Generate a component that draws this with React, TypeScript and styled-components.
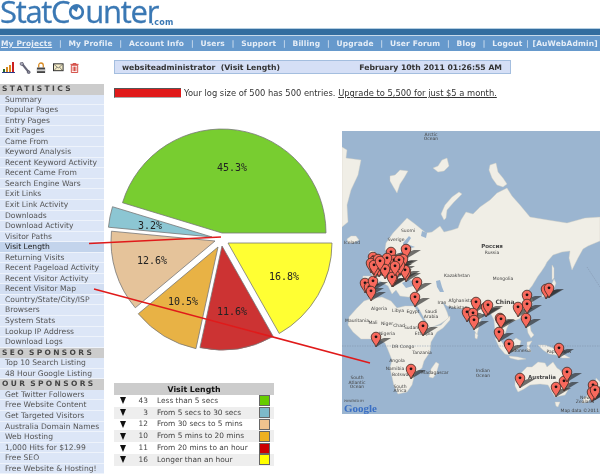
import React from 'react';
import styled, { createGlobalStyle } from 'styled-components';

const GlobalStyle = createGlobalStyle`
  html, body {
    margin: 0;
    padding: 0;
    width: 600px;
    height: 475px;
    overflow: hidden;
    background: #fff;
  }
`;

const Page = styled.div`
  position: relative;
  width: 600px;
  height: 475px;
  overflow: hidden;
  background: #fff;
  font-family: 'DejaVu Sans', Verdana, sans-serif;
  color: #333;
  filter: blur(0.35px);
`;

const LogoBar = styled.div`
  height: 28px;
  display: flex;
  align-items: flex-start;
`;

const LogoText = styled.span`
  font-family: 'Open Sans', sans-serif;
  font-size: 31px;
  line-height: 23px;
  letter-spacing: -1.3px;
  -webkit-text-stroke: 0.3px #3a78b4;
  color: #3a78b4;
  display: flex;
  align-items: flex-start;
`;

const LogoPie = styled.svg`
  flex: none;
  margin: 3px 0 0 -1px;
`;

const LogoDomain = styled.span`
  font-size: 8px;
  font-weight: bold;
  letter-spacing: 0.2px;
  color: #3a78b4;
  margin: 18px 0 0 -7px;
`;

const TopStripe = styled.div`
  height: 6px;
  background: #336d9f;
  border-top: 1px solid #b5cfe2;
  border-bottom: 1px solid #c8daea;
`;

const NavBar = styled.nav`
  height: 15px;
  background: #6699cc;
  display: flex;
  align-items: center;
  padding-left: 1px;
  font-size: 7.5px;
  font-weight: bold;
  letter-spacing: 0.15px;
  color: #e6eef7;
  white-space: nowrap;
`;

const NavLink = styled.span<{ $current?: boolean }>`
  flex: none;
  text-decoration: ${(p) => (p.$current ? 'underline' : 'none')};
`;

const NavDivider = styled.span<{ $narrow?: boolean }>`
  flex: none;
  width: ${(p) => (p.$narrow ? 10 : 16.3)}px;
  text-align: center;
  font-weight: normal;
`;

const Body = styled.div`
  display: flex;
  align-items: flex-start;
`;

const Sidebar = styled.aside`
  width: 104px;
  flex: none;
`;

const Toolbar = styled.div`
  height: 33px;
  display: flex;
  align-items: center;
  gap: 5px;
  padding-left: 2px;
`;

const ToolIcon = styled.svg<{ $inset?: number }>`
  flex: none;
  margin-left: ${(p) => p.$inset ?? 0}px;
`;

const SideHeading = styled.div`
  height: 10.55px;
  line-height: 10.5px;
  background: #cccccc;
  padding-left: 2px;
  font-size: 7.5px;
  font-weight: bold;
  letter-spacing: 2.35px;
  word-spacing: -2px;
  color: #444;
  white-space: nowrap;
`;

const SideRow = styled.div<{ $tone?: 'active' | 'hover' }>`
  box-sizing: border-box;
  height: 10.55px;
  line-height: 10px;
  padding-left: 5px;
  font-size: 7.6px;
  color: ${(p) => (p.$tone === 'active' ? '#222' : '#555')};
  white-space: nowrap;
  background: ${(p) =>
    p.$tone === 'active' ? '#c3d4ec' : p.$tone === 'hover' ? '#d2def2' : '#dce6f7'};
  border-bottom: 1px solid #eef3fb;
`;

const Main = styled.main`
  flex: 1;
  min-width: 0;
`;

const TitleBox = styled.div`
  box-sizing: border-box;
  width: 397px;
  height: 14px;
  margin: 9px 0 0 10px;
  padding: 0 8px 0 7px;
  display: flex;
  justify-content: space-between;
  align-items: center;
  background: #d5dff6;
  border: 1px solid #a4bedf;
  font-size: 7.7px;
  font-weight: bold;
  color: #333;
`;

const LogRow = styled.div`
  height: 16px;
  margin: 11px 0 0 10px;
  display: flex;
  align-items: center;
  gap: 3px;
  font-size: 8.35px;
  color: #333;
  white-space: nowrap;
`;

const LogBar = styled.div`
  box-sizing: border-box;
  width: 67px;
  height: 10px;
  background: #e01919;
  border-top: 1px solid #555;
  border-left: 1px solid #555;
  border-bottom: 1px solid #aaa;
`;

const LogLink = styled.span`
  text-decoration: underline;
`;

const Charts = styled.div`
  display: flex;
  align-items: flex-start;
  margin-top: 24px;
`;

const ChartColumn = styled.div`
  width: 238px;
  flex: none;
`;

const PieGraphic = styled.svg`
  display: block;
  width: 238px;
  height: 230px;
`;

const PieLabel = styled.text`
  font-family: 'DejaVu Sans Mono', monospace;
  font-size: 10px;
  fill: #222;
  text-anchor: middle;
`;

const Legend = styled.table`
  width: 160px;
  margin: 28px 0 0 10px;
  border-collapse: collapse;
  font-size: 7.4px;
  color: #444;
  table-layout: fixed;
`;

const LegendHead = styled.th`
  height: 12px;
  padding: 0;
  background: #cccccc;
  font-size: 7.8px;
  font-weight: bold;
  color: #111;
  text-align: center;
`;

const LegendRow = styled.tr`
  height: 11.8px;
  &:nth-child(even) {
    background: #eeeeee;
  }
`;

const LegendCell = styled.td<{ $align?: string }>`
  padding: 0;
  line-height: 10px;
  white-space: nowrap;
  text-align: ${(p) => p.$align ?? 'left'};
`;

const Arrow = styled.span`
  display: inline-block;
  border-left: 3.5px solid transparent;
  border-right: 3.5px solid transparent;
  border-top: 7px solid #111;
  vertical-align: middle;
`;

const Swatch = styled.span<{ $color: string }>`
  display: block;
  box-sizing: border-box;
  width: 11px;
  height: 11px;
  background: ${(p) => p.$color};
  border: 1px solid #666;
`;

const MapFrame = styled.svg`
  display: block;
  width: 258px;
  height: 283px;
  margin-top: 6px;
  flex: none;
`;

const MapLabel = styled.text<{ $size?: number; $bold?: boolean; $anchor?: string }>`
  font-family: 'DejaVu Sans', sans-serif;
  font-size: ${(p) => p.$size ?? 4.5}px;
  font-weight: ${(p) => (p.$bold ? 'bold' : 'normal')};
  fill: #444;
  text-anchor: ${(p) => p.$anchor ?? 'middle'};
`;

const GoogleMark = styled.text`
  font-family: 'Liberation Serif', serif;
  font-size: 11px;
  font-weight: bold;
  fill: #3a6fc4;
`;

const Overlay = styled.svg`
  position: absolute;
  left: 0;
  top: 0;
  width: 600px;
  height: 475px;
  pointer-events: none;
`;

const navItems = ['My Projects', 'My Profile', 'Account Info', 'Users', 'Support', 'Billing', 'Upgrade', 'User Forum', 'Blog', 'Logout'];

const statistics = [
  'Summary', 'Popular Pages', 'Entry Pages', 'Exit Pages', 'Came From', 'Keyword Analysis',
  'Recent Keyword Activity', 'Recent Came From', 'Search Engine Wars', 'Exit Links',
  'Exit Link Activity', 'Downloads', 'Download Activity', 'Visitor Paths', 'Visit Length',
  'Returning Visits', 'Recent Pageload Activity', 'Recent Visitor Activity', 'Recent Visitor Map',
  'Country/State/City/ISP', 'Browsers', 'System Stats', 'Lookup IP Address', 'Download Logs',
];
const seoSponsors = ['Top 10 Search Listing', '48 Hour Google Listing'];
const ourSponsors = [
  'Get Twitter Followers', 'Free Website Content', 'Get Targeted Visitors', 'Australia Domain Names',
  'Web Hosting', '1,000 Hits for $12.99', 'Free SEO', 'Free Website & Hosting!',
];

const slices = [
  { pct: 45.3, fill: '#78cd30', cx: 222, cy: 233, lx: 232, ly: 171 },
  { pct: 3.2, fill: '#8cc6d3', cx: 212, cy: 237, lx: 150, ly: 229 },
  { pct: 12.6, fill: '#e5c39a', cx: 215, cy: 241, lx: 152, ly: 264 },
  { pct: 10.5, fill: '#e8b245', cx: 218, cy: 247, lx: 183, ly: 305 },
  { pct: 11.6, fill: '#cc3333', cx: 222, cy: 246, lx: 232, ly: 315 },
  { pct: 16.8, fill: '#ffff33', cx: 228, cy: 243, lx: 284, ly: 280 },
];

const legend = [
  { count: 43, label: 'Less than 5 secs', color: '#66cc00' },
  { count: 3, label: 'From 5 secs to 30 secs', color: '#7db9c9' },
  { count: 12, label: 'From 30 secs to 5 mins', color: '#f0c48e' },
  { count: 10, label: 'From 5 mins to 20 mins', color: '#eeb020' },
  { count: 11, label: 'From 20 mins to an hour', color: '#cc0000' },
  { count: 16, label: 'Longer than an hour', color: '#ffff00' },
];

function slicePath(cx: number, cy: number, from: number, to: number) {
  const r = 104;
  const rad = Math.PI / 180;
  const x0 = cx + r * Math.cos(from * rad);
  const y0 = cy - r * Math.sin(from * rad);
  const x1 = cx + r * Math.cos(to * rad);
  const y1 = cy - r * Math.sin(to * rad);
  const large = to - from > 180 ? 1 : 0;
  return `M${cx} ${cy}L${x0} ${y0}A${r} ${r} 0 ${large} 0 ${x1} ${y1}Z`;
}

function PieChart() {
  let angle = 0;
  const total = slices.reduce((sum, s) => sum + s.pct, 0);
  return (
    <PieGraphic viewBox="104 125 238 230">
      {slices.map((s) => {
        const from = angle;
        angle += (s.pct / total) * 360;
        return <path key={s.pct} d={slicePath(s.cx, s.cy, from, angle)} fill={s.fill} stroke="#777" strokeWidth="0.8" />;
      })}
      {slices.map((s) => (
        <PieLabel key={s.pct} x={s.lx} y={s.ly}>{s.pct}%</PieLabel>
      ))}
    </PieGraphic>
  );
}

const land = [
  // eurasia
  '407,218 415,224 426,233 432,232 440,226 444,232 452,230 458,228 461,220 466,212 473,214 480,207 490,200 497,193 507,188 512,196 520,205 530,217 548,220 567,223 585,218 600,217 600,241 588,246 583,249 578,258 572,270 569,258 570,251 562,252 553,255 547,262 545,266 541,272 538,276 532,286 527,292 533,300 531,307 527,314 519,319 510,322 507,328 505,334 499,330 498,340 495,331 494,320 491,314 484,312 480,322 477,335 473,328 468,318 463,309 455,308 447,306 442,301 447,312 449,318 440,324 430,328 424,318 419,309 415,303 417,298 408,297 400,296 396,290 392,294 388,286 380,281 376,284 372,292 364,292 362,285 363,276 372,276 371,268 376,262 381,258 388,255 392,254 385,250 386,243 393,233',
  // africa
  '357,308 364,301 373,298 382,297 391,301 397,308 405,306 414,306 419,314 424,322 430,328 441,325 450,316 450,320 443,328 437,332 431,342 430,352 424,361 422,368 415,373 412,385 407,392 398,394 394,386 392,377 390,368 392,360 388,350 385,343 378,339 370,339 361,339 353,332 348,325 349,317',
  // greenland
  '342,147 347,150 346,158 361,160 358,175 351,190 347,205 348,222 342,227',
  // iceland
  '347,239 351,236 356,236 359,240 353,243 348,243',
  // svalbard
  '390,176 395,175 400,170 408,171 404,178 400,184 397,193 394,188 390,181',
  // novaya zemlya
  '459,192 462,194 454,202 447,210 446,218 444,220 441,214 445,205 452,197',
  // severnaya
  '490,165 496,163 498,172 503,178 507,184 503,187 497,185 492,178 489,170',
  // franz josef
  '433,168 438,166 442,160 447,158 449,166 444,171 438,172',
  // uk
  '370,251 374,251 375,258 378,262 371,264 368,259',
  // madagascar
  '436,362 439,364 436,374 433,378 429,377 431,369',
  // australia
  '515,377 521,373 527,367 532,367 538,362 545,363 547,367 553,362 557,368 560,370 565,376 570,382 568,390 565,395 555,397 552,392 548,385 540,384 530,385 524,389 518,392 515,386',
  // tasmania
  '555,402 560,402 558,407 556,406',
  // new guinea
  '538,345 545,345 553,348 558,351 563,354 570,358 562,358 556,355 549,354 543,350',
  // sumatra
  '495,338 501,341 507,349 509,355 505,354 499,347',
  // java
  '509,356 518,357 526,359 518,360 510,358',
  // borneo
  '510,343 516,338 521,341 519,348 513,352 510,349',
  // sulawesi
  '527,342 532,341 529,346 531,352 527,350',
  // philippines
  '527,327 530,325 531,331 534,335 531,338 528,333',
  // sri lanka
  '475,333 478,335 477,339 475,338',
  // japan
  '554,279 556,283 553,291 548,295 542,297 543,293 549,290',
  // sakhalin
  '552,265 554,268 554,278 552,280 552,272',
  // new zealand
  '596,378 600,382 600,390 596,393 595,386',
  '584,398 592,392 594,394 588,402 582,403',
];

const water = [
  // black sea
  '402,283 408,280 415,281 420,284 413,286 406,288',
  // caspian
  '436,281 440,280 442,287 444,292 440,292 437,287',
  // baltic
  '399,254 404,248 403,243 409,236 411,238 407,244 415,247 407,249 408,255',
  // white sea
  '422,231 427,233 426,238 421,236',
];

const pins = [
  [376, 337], [411, 369], [423, 326], [415, 297], [417, 282], [393, 277], [406, 272],
  [365, 283], [369, 287], [373, 281], [371, 291], [476, 302], [467, 312], [473, 313], [474, 320],
  [486, 307], [488, 305], [500, 318], [501, 319], [499, 332], [509, 344], [518, 307], [527, 295],
  [527, 304], [526, 318], [546, 289], [549, 288], [559, 348], [520, 378], [556, 387], [564, 381],
  [567, 372], [593, 385], [592, 392], [595, 390], [373, 257], [391, 252], [406, 249], [374, 261],
  [371, 263], [377, 265], [379, 267], [384, 261], [390, 262], [391, 267], [397, 263], [397, 268],
  [403, 259], [405, 270], [392, 277], [375, 268], [383, 266], [400, 265], [378, 259], [381, 263],
  [387, 265], [394, 260], [399, 260], [387, 258], [374, 265], [395, 266], [385, 269], [380, 261],
];

function Pin({ x, y }: { x: number; y: number }) {
  return (
    <g transform={`translate(${x} ${y})`}>
      <path d="M0 10C-1 6.5 -4.8 3.8 -4.8 0A4.8 4.8 0 1 1 4.8 0C4.8 3.8 1 6.5 0 10Z" fill="#f8695c" stroke="#3a2a22" strokeWidth="0.8" />
      <circle cx="0" cy="-0.2" r="1.4" fill="#1a1010" />
    </g>
  );
}

function WorldMap() {
  return (
    <MapFrame viewBox="342 131 258 283">
      <rect x="342" y="131" width="258" height="283" fill="#9bb5d0" />
      {land.map((points) => (
        <polygon key={points} points={points} fill="#f0eee6" stroke="#cfcdbf" strokeWidth="0.4" />
      ))}
      {water.map((points) => (
        <polygon key={points} points={points} fill="#9bb5d0" />
      ))}
      <path d="M342 346H600" stroke="#7f8ea6" strokeWidth="0.5" strokeDasharray="1.5 1" fill="none" />
      <path d="M587 267L600 287" stroke="#7f8ea6" strokeWidth="0.5" strokeDasharray="1.5 1" fill="none" />
      <MapLabel x="431" y="136">Arctic</MapLabel>
      <MapLabel x="431" y="140">Ocean</MapLabel>
      <MapLabel x="408" y="232">Suomi</MapLabel>
      <MapLabel x="396" y="241">Sverige</MapLabel>
      <MapLabel x="352" y="244">Iceland</MapLabel>
      <MapLabel x="492" y="248" $size={5.5} $bold>Россия</MapLabel>
      <MapLabel x="492" y="254">Russia</MapLabel>
      <MapLabel x="457" y="277">Kazakhstan</MapLabel>
      <MapLabel x="503" y="280">Mongolia</MapLabel>
      <MapLabel x="505" y="304" $size={6} $bold>China</MapLabel>
      <MapLabel x="442" y="304">Iran</MapLabel>
      <MapLabel x="462" y="302">Afghanistan</MapLabel>
      <MapLabel x="458" y="309">Pakistan</MapLabel>
      <MapLabel x="431" y="313">Saudi</MapLabel>
      <MapLabel x="431" y="318">Arabia</MapLabel>
      <MapLabel x="413" y="313">Egypt</MapLabel>
      <MapLabel x="379" y="310">Algeria</MapLabel>
      <MapLabel x="398" y="312">Libya</MapLabel>
      <MapLabel x="357" y="322">Mauritania</MapLabel>
      <MapLabel x="373" y="324">Mali</MapLabel>
      <MapLabel x="387" y="325">Niger</MapLabel>
      <MapLabel x="399" y="327">Chad</MapLabel>
      <MapLabel x="411" y="329">Sudan</MapLabel>
      <MapLabel x="424" y="335">Ethiopia</MapLabel>
      <MapLabel x="387" y="335">Nigeria</MapLabel>
      <MapLabel x="403" y="348">DR Congo</MapLabel>
      <MapLabel x="422" y="354">Tanzania</MapLabel>
      <MapLabel x="397" y="362">Angola</MapLabel>
      <MapLabel x="395" y="370">Namibia</MapLabel>
      <MapLabel x="403" y="376">Botswana</MapLabel>
      <MapLabel x="400" y="388">South</MapLabel>
      <MapLabel x="400" y="392">Africa</MapLabel>
      <MapLabel x="435" y="374">Madagascar</MapLabel>
      <MapLabel x="357" y="379">South</MapLabel>
      <MapLabel x="357" y="384">Atlantic</MapLabel>
      <MapLabel x="357" y="388">Ocean</MapLabel>
      <MapLabel x="483" y="372">Indian</MapLabel>
      <MapLabel x="483" y="377">Ocean</MapLabel>
      <MapLabel x="520" y="352">Indonesia</MapLabel>
      <MapLabel x="559" y="353">Papua New</MapLabel>
      <MapLabel x="542" y="379" $size={5.5} $bold>Australia</MapLabel>
      <MapLabel x="585" y="399">New</MapLabel>
      <MapLabel x="585" y="403">Zealand</MapLabel>
      <MapLabel x="344" y="402" $size={3} $anchor="start">POWERED BY</MapLabel>
      <GoogleMark x="344" y="412">Google</GoogleMark>
      <MapLabel x="599" y="412" $anchor="end">Map data ©2011</MapLabel>
      {pins.map(([x, y]) => (
        <polygon key={`s${x}-${y}`} points={`${x},${y + 10} ${x + 15},${y + 1} ${x + 8},${y + 1} ${x + 2},${y + 3}`} fill="#2a2a2a" opacity="0.65" />
      ))}
      {pins.map(([x, y]) => (
        <Pin key={`${x}-${y}`} x={x} y={y} />
      ))}
    </MapFrame>
  );
}

function ToolIcons() {
  return (
    <Toolbar>
      <ToolIcon width="13" height="11" viewBox="0 0 13 11">
        <path d="M0 10.5H13" stroke="#2a3a88" strokeWidth="1" />
        <rect x="1" y="7" width="2" height="3" fill="#2a6a2a" />
        <rect x="4" y="5" width="2" height="5" fill="#d88a20" />
        <rect x="7" y="3" width="2" height="7" fill="#d88a20" />
        <rect x="10" y="0" width="2" height="10" fill="#cc2020" />
      </ToolIcon>
      <ToolIcon width="12" height="12" viewBox="0 0 12 13" $inset={-1}>
        <path d="M2 1L10 11" stroke="#667" strokeWidth="2.4" />
        <circle cx="2.5" cy="2" r="1.8" fill="#aab" stroke="#445" strokeWidth="0.6" />
        <circle cx="10" cy="11" r="1.6" fill="#889" stroke="#445" strokeWidth="0.6" />
      </ToolIcon>
      <ToolIcon width="10" height="12" viewBox="0 0 11 13">
        <path d="M3 6V3.5A2.5 2.5 0 0 1 8 3.5V6" fill="none" stroke="#d88a20" strokeWidth="1.4" />
        <rect x="1" y="6" width="9" height="6" fill="#444" />
        <rect x="1" y="8" width="9" height="2" fill="#ccc" />
      </ToolIcon>
      <ToolIcon width="11" height="9" viewBox="0 0 12 9" $inset={2}>
        <rect x="0.5" y="0.5" width="10.5" height="7.5" fill="#f4ecc8" stroke="#222" />
        <path d="M1 1L5.7 5L10.5 1M1 8L4.5 4M10.5 8L7 4" fill="none" stroke="#555" strokeWidth="0.7" />
      </ToolIcon>
      <ToolIcon width="9" height="10" viewBox="0 0 9 11" $inset={1}>
        <path d="M0 1.5H9M3 1.5V0.5H6V1.5M1 2.5H8V10.5H1ZM3 4V9M4.5 4V9M6 4V9" fill="none" stroke="#cc2a20" strokeWidth="0.9" />
      </ToolIcon>
    </Toolbar>
  );
}

function StatLogo() {
  return (
    <LogoBar>
      <LogoText>
        StatC
        <LogoPie width="17" height="18" viewBox="0 0 18 20">
          <circle cx="9" cy="10" r="7" fill="none" stroke="#3a78b4" strokeWidth="3" />
          <path d="M9 10L3 5A8 8 0 0 1 12 2Z" fill="#3a78b4" />
        </LogoPie>
        unter
      </LogoText>
      <LogoDomain>.com</LogoDomain>
    </LogoBar>
  );
}

export default function App() {
  return (
    <Page>
      <GlobalStyle />
      <StatLogo />
      <TopStripe />
      <NavBar>
        {navItems.map((item, i) => (
          <React.Fragment key={item}>
            <NavLink $current={i === 0}>{item}</NavLink>
            <NavDivider $narrow={item === 'Logout'}>|</NavDivider>
          </React.Fragment>
        ))}
        <NavLink>[AuWebAdmin]</NavLink>
      </NavBar>
      <Body>
        <Sidebar>
          <ToolIcons />
          <SideHeading>STATISTICS</SideHeading>
          {statistics.map((item) => (
            <SideRow key={item} $tone={item === 'Visit Length' ? 'active' : item === 'Recent Visitor Map' ? 'hover' : undefined}>
              {item}
            </SideRow>
          ))}
          <SideHeading>SEO SPONSORS</SideHeading>
          {seoSponsors.map((item) => (
            <SideRow key={item}>{item}</SideRow>
          ))}
          <SideHeading>OUR SPONSORS</SideHeading>
          {ourSponsors.map((item) => (
            <SideRow key={item}>{item}</SideRow>
          ))}
        </Sidebar>
        <Main>
          <TitleBox>
            <span>websiteadministrator&nbsp; (Visit Length)</span>
            <span>February 10th 2011 01:26:55 AM</span>
          </TitleBox>
          <LogRow>
            <LogBar />
            <span>Your log size of 500 has 500 entries. <LogLink>Upgrade to 5,500 for just $5 a month.</LogLink></span>
          </LogRow>
          <Charts>
            <ChartColumn>
              <PieChart />
              <Legend>
                <colgroup>
                  <col width="18" />
                  <col width="16" />
                  <col width="9" />
                  <col width="102" />
                  <col width="15" />
                </colgroup>
                <thead>
                  <tr>
                    <LegendHead colSpan={5}>Visit Length</LegendHead>
                  </tr>
                </thead>
                <tbody>
                  {legend.map((row) => (
                    <LegendRow key={row.label}>
                      <LegendCell $align="center"><Arrow /></LegendCell>
                      <LegendCell $align="right">{row.count}</LegendCell>
                      <LegendCell />
                      <LegendCell>{row.label}</LegendCell>
                      <LegendCell><Swatch $color={row.color} /></LegendCell>
                    </LegendRow>
                  ))}
                </tbody>
              </Legend>
            </ChartColumn>
            <WorldMap />
          </Charts>
        </Main>
      </Body>
      <Overlay viewBox="0 0 600 475">
        <path d="M89 243.5L221 237" stroke="#e01a1a" strokeWidth="1.6" fill="none" />
        <path d="M94 289L370 363" stroke="#e01a1a" strokeWidth="1.6" fill="none" />
      </Overlay>
    </Page>
  );
}
